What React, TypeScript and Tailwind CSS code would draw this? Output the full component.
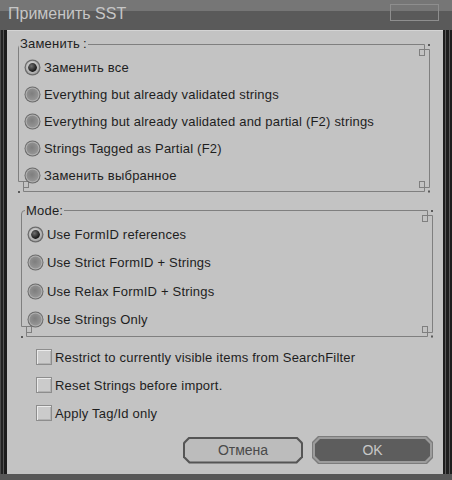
import React from "react";

const chamfer6 =
  "[clip-path:polygon(6px_0,calc(100%_-_6px)_0,100%_6px,100%_calc(100%_-_6px),calc(100%_-_6px)_100%,6px_100%,0_calc(100%_-_6px),0_6px)]";
const chamfer5 =
  "[clip-path:polygon(5px_0,calc(100%_-_5px)_0,100%_5px,100%_calc(100%_-_5px),calc(100%_-_5px)_100%,5px_100%,0_calc(100%_-_5px),0_5px)]";

function Frame({ w, h }: { w: number; h: number }) {
  const r = w - 0.5;
  const b = h - 0.5;
  const stroke = "#7f7f7f";
  return (
    <svg
      className="absolute left-0 top-0 pointer-events-none overflow-visible"
      width={w}
      height={h}
      viewBox={`0 0 ${w} ${h}`}
    >
      <g fill="none" stroke={stroke} strokeWidth={1}>
        <path d={`M0.5 ${h - 10.5} V4 Q0.5 0.5 4 0.5 H${w - 5.5} V5.5`} />
        <path d={`M${w - 10.5} 5.5 H${r} V${h - 4.5} H${w - 10.5}`} />
        <rect x={w - 10.5} y={5.5} width={5} height={6} />
        <rect x={w - 10.5} y={h - 10.5} width={5} height={6} />
        <path d={`M0.5 ${h - 10.5} H5.5 V${b} H${w - 5.5} V${h - 4.5}`} />
        <rect x={5.5} y={h - 10.5} width={5} height={6} />
      </g>
      <rect x={w - 2} y={0} width={2} height={2} fill="#5a5a5a" />
      <rect x={w - 2} y={h - 1.5} width={2} height={2} fill="#5a5a5a" />
      <rect x={0} y={h - 1} width={2} height={2} fill="#5a5a5a" />
    </svg>
  );
}

function Radio({ checked }: { checked?: boolean }) {
  return (
    <svg width={17} height={17} viewBox="0 0 17 17" className="shrink-0">
      <defs>
        <radialGradient id="rgOn" cx="45%" cy="40%" r="60%">
          <stop offset="0%" stopColor="#e6e6e6" />
          <stop offset="100%" stopColor="#a4a4a4" />
        </radialGradient>
        <radialGradient id="rgDot" cx="38%" cy="35%" r="65%">
          <stop offset="0%" stopColor="#707070" />
          <stop offset="100%" stopColor="#121212" />
        </radialGradient>
        <radialGradient id="rgOff" cx="45%" cy="42%" r="60%">
          <stop offset="0%" stopColor="#7e7e7e" />
          <stop offset="100%" stopColor="#969696" />
        </radialGradient>
      </defs>
      {checked ? (
        <>
          <circle cx={8.5} cy={8.5} r={8} fill="#6c6c6c" />
          <circle cx={8.5} cy={8.5} r={6.7} fill="url(#rgOn)" />
          <circle cx={8.5} cy={8.5} r={4.4} fill="url(#rgDot)" />
        </>
      ) : (
        <>
          <circle cx={8.5} cy={8.5} r={8} fill="#6a6a6a" />
          <circle cx={8.5} cy={8.5} r={7} fill="#b0b0b0" />
          <circle cx={8.5} cy={8.5} r={5.9} fill="url(#rgOff)" />
        </>
      )}
    </svg>
  );
}

function RadioRow({
  label,
  checked,
  h,
}: {
  label: string;
  checked?: boolean;
  h: string;
}) {
  return (
    <div className={`flex items-center gap-[3px] ${h}`}>
      <Radio checked={checked} />
      <span className="text-[13px] leading-[15px] tracking-[0.2px] text-[#1e1e1e] whitespace-nowrap">
        {label}
      </span>
    </div>
  );
}

function CheckRow({ label }: { label: string }) {
  return (
    <div className="flex items-center gap-[3px] h-[28px]">
      <div className="w-[16px] h-[16px] shrink-0 border border-[#8d8d8d] bg-[#cbcbcb] shadow-[inset_1px_1px_0_#ebebeb,inset_-1px_-1px_0_#b2b2b2]" />
      <span className="text-[13px] leading-[15px] tracking-[0.2px] text-[#1e1e1e] whitespace-nowrap">
        {label}
      </span>
    </div>
  );
}

export default function App() {
  return (
    <div className="w-[452px] h-[480px] flex flex-col overflow-hidden font-['Liberation_Sans',Arial,sans-serif] bg-[#c3c3c3]">
      {/* Title bar */}
      <div className="h-[30px] shrink-0 flex items-start bg-[linear-gradient(#767676_0_11px,#5a5a5a_11px)]">
        <span className="pl-[8px] pt-[5px] text-[16px] leading-[18px] text-[#c6c6c6] whitespace-nowrap">
          Применить SST
        </span>
        <div className="ml-auto mr-[13px] mt-[4px] w-[49px] h-[17px] border border-[#8e8e8e]" />
      </div>

      {/* Body */}
      <div className="flex-1 flex min-h-0">
        <div className="w-[7px] shrink-0 bg-[linear-gradient(90deg,#4a4a4a_0_1px,#222_1px_3px,#555_3px_4px,#1c1c1c_4px)]" />
        <div className="flex-1 flex flex-col pt-[14px] bg-[#c3c3c3] shadow-[inset_0_1px_0_#d4d4d4]">
          {/* Group 1 */}
          <div className="relative ml-[11px] w-[412px] h-[148px] shrink-0">
            <Frame w={412} h={148} />
            <span className="absolute left-[1px] top-[-8px] px-[1px] bg-[#c3c3c3] text-[13px] leading-[15px] tracking-[0.2px] text-[#1e1e1e] whitespace-nowrap">
              Заменить<span className="ml-[3px]">:</span>
            </span>
            <div className="relative flex flex-col pt-[10px] pl-[6px]">
              <RadioRow h="h-[27px]" checked label="Заменить все" />
              <RadioRow h="h-[27px]" label="Everything but already validated strings" />
              <RadioRow
                h="h-[27px]"
                label="Everything but already validated and partial (F2) strings"
              />
              <RadioRow h="h-[27px]" label="Strings Tagged as Partial (F2)" />
              <RadioRow h="h-[27px]" label="Заменить выбранное" />
            </div>
          </div>

          {/* Group 2 */}
          <div className="relative ml-[14px] mt-[18px] w-[412px] h-[127px] shrink-0">
            <Frame w={412} h={127} />
            <span className="absolute left-[4px] top-[-7px] px-[1px] bg-[#c3c3c3] text-[13px] leading-[15px] tracking-[0.2px] text-[#1e1e1e] whitespace-nowrap">
              Mode:
            </span>
            <div className="relative flex flex-col pt-[10px] pl-[6px]">
              <RadioRow h="h-[28.5px]" checked label="Use FormID references" />
              <RadioRow h="h-[28.5px]" label="Use Strict FormID + Strings" />
              <RadioRow h="h-[28.5px]" label="Use Relax FormID + Strings" />
              <RadioRow h="h-[28.5px]" label="Use Strings Only" />
            </div>
          </div>

          {/* Checkboxes */}
          <div className="flex flex-col ml-[29px] mt-[6px]">
            <CheckRow label="Restrict to currently visible items from SearchFilter" />
            <CheckRow label="Reset Strings before import." />
            <CheckRow label="Apply Tag/Id only" />
          </div>

          {/* Buttons */}
          <div className="flex items-center justify-end gap-[9px] mt-[9px] pr-[10px]">
            <div className={`w-[120px] h-[27px] p-[2px] bg-[#555555] ${chamfer6}`}>
              <div
                className={`w-full h-full flex items-center justify-center bg-[#bcbcbc] text-[14px] leading-[16px] text-[#4a4a4a] ${chamfer5}`}
              >
                Отмена
              </div>
            </div>
            <div className={`w-[121px] h-[28px] p-[1px] bg-[#7c7c7c] ${chamfer6}`}>
              <div className={`w-full h-full p-[2px] bg-[#9c9c9c] ${chamfer6}`}>
                <div
                  className={`w-full h-full flex items-center justify-center bg-[#5d5d5d] text-[14px] leading-[16px] text-[#c8c8c8] ${chamfer5}`}
                >
                  OK
                </div>
              </div>
            </div>
          </div>
        </div>
        <div className="w-[9px] shrink-0 bg-[linear-gradient(90deg,#1e1e1e_0_2px,#5a5a5a_2px_3px,#1e1e1e_3px_6px,#5a5a5a_6px_7px,#1e1e1e_7px)]" />
      </div>

      {/* Bottom strip */}
      <div className="h-[6px] shrink-0 bg-[#575757]" />
    </div>
  );
}
